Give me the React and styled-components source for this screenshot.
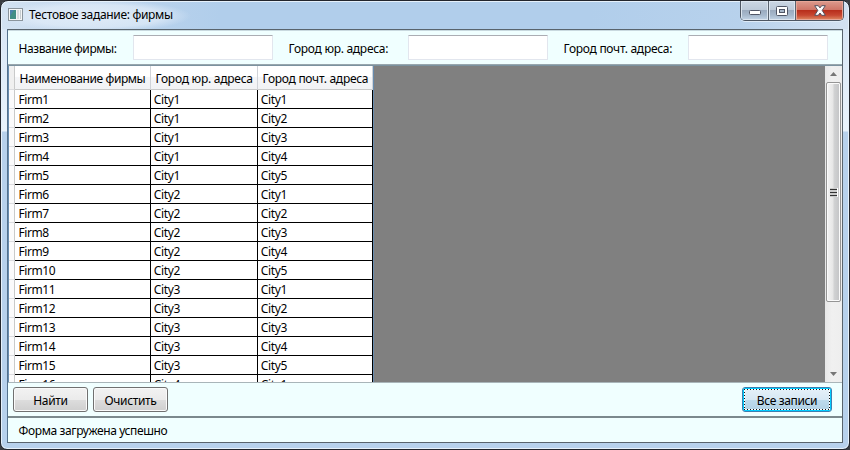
import React from "react";
import styled, { createGlobalStyle } from "styled-components";

const Global = createGlobalStyle`
  * { box-sizing: border-box; }
  body { margin: 0; background: #3a3d42; overflow: hidden; }
`;

const Window = styled.div`
  width: 850px;
  height: 450px;
  padding: 0 6px 6px;
  display: flex;
  flex-direction: column;
  border: 1px solid #23262d;
  border-radius: 8px 8px 7px 7px;
  box-shadow: inset 0 0 0 1px #e6f1fb;
  background:
    radial-gradient(ellipse 95px 16px at 95px 15px, rgba(232, 241, 250, 0.8) 0, rgba(225, 236, 248, 0.7) 70%, rgba(205, 224, 242, 0) 100%) 0 0 / 100% 28px no-repeat,
    linear-gradient(90deg, #d3e2f2 0, rgba(195, 216, 238, 0.6) 110px, rgba(177, 206, 235, 0) 220px) 0 0 / 100% 28px no-repeat,
    linear-gradient(270deg, #d3e1f1 0, rgba(190, 213, 237, 0.5) 110px, rgba(177, 206, 235, 0) 260px) 0 0 / 100% 28px no-repeat,
    linear-gradient(#b1ceeb, #b1ceeb) 0 0 / 100% 28px no-repeat,
    linear-gradient(#d5e4f4 0, #e9f3fc 130px, #b7d1ec 131px, #b7d1ec 100%);
  font-family: "Noto Sans", "Open Sans", sans-serif;
  font-size: 12px;
  color: #000;
`;

const TitleBar = styled.header`
  height: 28px;
  flex: none;
  display: flex;
  align-items: flex-start;
  padding: 0 0 0 1px;
`;

const AppIcon = styled.svg`
  margin: 7px 6px 0 0;
  flex: none;
`;

const Title = styled.h1`
  margin: 5px 0 0;
  flex: 1;
  font-size: 12px;
  font-weight: 400;
  line-height: 18px;
`;

const Text = styled.span`
  white-space: nowrap;
  letter-spacing: ${(p) => p.$track || 0}px;
`;

const Controls = styled.div`
  display: flex;
  width: 104px;
  height: 20px;
  margin-right: -1px;
  border: 1px solid #4d5663;
  border-top: 0;
  border-radius: 0 0 5px 5px;
  box-shadow: 0 1px 0 #dfebf7;
  overflow: hidden;
`;

const Control = styled.button`
  width: ${(p) => p.$width}px;
  height: 19px;
  padding: 0;
  border: 0;
  border-right: ${(p) => (p.$danger ? "0" : "1px solid #59626e")};
  box-shadow: inset 0 0 0 1px ${(p) => (p.$danger ? "#e7a697" : "#dce5ef")};
  background: ${(p) =>
    p.$danger
      ? "linear-gradient(#dc9b8e 0, #cf7668 45%, #b82f1c 50%, #c74731 75%, #df8d65 100%)"
      : "linear-gradient(#cbd7e4 0, #bdcad9 45%, #9babbf 50%, #a7b9cd 75%, #c3d4e6 100%)"};
  display: flex;
  align-items: center;
  justify-content: center;
`;

const MinimizeGlyph = styled.svg`
  margin-top: 4px;
`;

const Client = styled.main`
  flex: 1;
  min-height: 0;
  display: flex;
  flex-direction: column;
  border: 1px solid #59646d;
  border-left-color: #54718c;
  background: #f0ffff;
`;

const Filters = styled.section`
  height: 35px;
  flex: none;
  display: flex;
  align-items: flex-start;
  padding: 4px 0 0 10px;
  border-top: 1px solid #c9d9df;
  border-bottom: 1px solid #98a6ad;
`;

const FilterLabel = styled.label`
  width: ${(p) => p.$width}px;
  flex: none;
  padding: 5px 0 0 0.6px;
  line-height: 18px;
`;

const Input = styled.input`
  width: 140px;
  height: 25px;
  flex: none;
  margin-right: 15px;
  padding: 2px 4px;
  border: 1px solid #e2e6ee;
  border-top-color: #abadb3;
  border-radius: 1px;
  background: #fff;
  font: inherit;
  outline: 0;

  &:last-child { margin-right: 0; }
`;

const GridArea = styled.section`
  height: 317px;
  flex: none;
  display: flex;
  border-top: 1px solid #7b929f;
  background: #808080;
  overflow: hidden;
`;

const DataGrid = styled.div`
  width: 366px;
  height: 316px;
  overflow: hidden;
  border-left: 1px solid #688caf;
  border-right: 1px solid #688caf;
  background: #fff;
`;

const Row = styled.div`
  display: grid;
  grid-template-columns: 6px 136px 107px 115px;
  grid-template-rows: 100%;
  height: ${(p) => (p.$head ? 24 : 19)}px;
`;

const RowHeader = styled.div`
  background: ${(p) => (p.$head ? "#f0f0f0" : "#fbfbfc")};
  border-right: 1px solid #c9caca;
  border-bottom: 1px solid #dcdde0;
`;

const HeadCell = styled.div`
  display: flex;
  align-items: center;
  padding: 2px 0 0 4.6px;
  border-right: 1px solid #d0d3d8;
  border-bottom: 1px solid #c9caca;
  background: linear-gradient(#fff 0, #fff 45%, #f5f6f8 50%, #f2f3f5 100%);
`;

const Cell = styled.div`
  padding-left: ${(p) => (p.$first ? 3.4 : 2.8)}px;
  line-height: 20px;
  border-right: 1px solid #000;
  border-bottom: 1px solid #000;
`;

const Spacer = styled.div`
  flex: 1;
`;

const ScrollTrack = styled.div`
  width: 17px;
  height: 316px;
  flex: none;
  display: flex;
  flex-direction: column;
  align-items: center;
  background: linear-gradient(90deg, #e7e7e7 0, #f0f0f0 40%, #eee 100%);
`;

const ArrowBox = styled.div`
  height: 16px;
  display: flex;
  align-items: center;
  justify-content: center;
`;

const Thumb = styled.div`
  width: 15px;
  height: 220px;
  display: flex;
  align-items: center;
  justify-content: center;
  border: 1px solid #959595;
  border-radius: 2px;
  box-shadow: inset 0 0 0 1px #fbfbfb;
  background: linear-gradient(90deg, #f4f4f4 0, #e6e6e6 45%, #d1d2d3 55%, #c2c3c5 100%);
`;

const Actions = styled.section`
  height: 34px;
  flex: none;
  display: flex;
  gap: 5px;
  padding: 4px 10px 0 5px;
  border-top: 1px solid #a9b5b9;
`;

const Button = styled.button`
  width: ${(p) => p.$width}px;
  height: 25px;
  padding: 0;
  border: 1px solid ${(p) => (p.$focused ? "#3c7fb1" : "#707070")};
  border-radius: 3px;
  box-shadow: ${(p) => (p.$focused ? "inset 0 0 0 2px #00ccff" : "inset 0 0 0 1px #fafafa")};
  background: ${(p) =>
    p.$focused
      ? "linear-gradient(#e6f1f9 0, #d7e8f4 50%, #bddbed 51%, #b1d1e5 100%)"
      : "linear-gradient(#f2f2f2 0, #ebebeb 50%, #dddddd 51%, #cfcfcf 100%)"};
  font: inherit;
  color: #000;
`;

const FocusRing = styled.span`
  display: flex;
  align-items: center;
  justify-content: center;
  height: 21px;
  margin: 0 1px;
  padding-top: 1px;
  border: 1px solid transparent;
  ${(p) =>
    p.$on &&
    `background:
      repeating-linear-gradient(90deg, #111 0 1px, #fff 1px 3px) 0 0 / 100% 1px no-repeat border-box,
      repeating-linear-gradient(90deg, #111 0 1px, #fff 1px 3px) 0 100% / 100% 1px no-repeat border-box,
      repeating-linear-gradient(#111 0 1px, #fff 1px 3px) 0 0 / 1px 100% no-repeat border-box,
      repeating-linear-gradient(#111 0 1px, #fff 1px 3px) 100% 0 / 1px 100% no-repeat border-box;`}
`;

const Status = styled.footer`
  flex: 1;
  padding: 3px 0 0 10.6px;
  border-top: 2px solid #7b898d;
  line-height: 20px;
`;

const filters = [
  { text: "Название фирмы:", width: 115, track: -0.45 },
  { text: "Город юр. адреса:", width: 120, track: -0.28 },
  { text: "Город почт. адреса:", width: 125, track: -0.28 },
];

const columns = [
  { text: "Наименование фирмы", track: -0.42 },
  { text: "Город юр. адреса", track: -0.25 },
  { text: "Город почт. адреса", track: -0.28 },
];

const firms = Array.from({ length: 16 }, (_, i) => [
  `Firm${i + 1}`,
  `City${Math.floor(i / 5) + 1}`,
  `City${(i % 5) + 1}`,
]);

export default function App() {
  return (
    <>
      <Global />
      <Window>
        <TitleBar>
          <AppIcon width="15" height="13" viewBox="0 0 15 13">
            <rect x=".5" y=".5" width="14" height="12" fill="#f5f7f8" stroke="#8a949c" />
            <rect x="2" y="2" width="6" height="9" fill="#438f86" />
            <path d="M2 2h4l-4 6z" fill="#4c83ad" />
            <rect x="9" y="2" width="2" height="9" fill="#d9dde0" />
            <rect x="12" y="2" width="1" height="9" fill="#c6ccd0" />
          </AppIcon>
          <Title><Text $track={-0.32}>Тестовое задание: фирмы</Text></Title>
          <Controls>
            <Control $width={28} aria-label="Свернуть">
              <MinimizeGlyph width="12" height="6" viewBox="0 0 12 6">
                <rect x=".5" y=".5" width="11" height="4" rx="1" fill="#fff" stroke="#505666" />
              </MinimizeGlyph>
            </Control>
            <Control $width={27} aria-label="Развернуть">
              <svg width="12" height="10" viewBox="0 0 12 10">
                <rect x=".5" y=".5" width="11" height="9" rx="1" fill="#fff" stroke="#505666" />
                <rect x="3.5" y="3.5" width="5" height="3" fill="#a9b9cb" stroke="#505666" />
              </svg>
            </Control>
            <Control $width={47} $danger aria-label="Закрыть">
              <svg width="12" height="11" viewBox="0 0 12 11">
                <path d="M.7 .7h3.6L6 2.9 7.7 .7h3.6L8.2 5.4l3.1 4.9H7.7L6 8 4.3 10.3H.7l3.1-4.9z" fill="#fff" stroke="#53525f" strokeLinejoin="round" />
              </svg>
            </Control>
          </Controls>
        </TitleBar>
        <Client>
          <Filters>
            {filters.map((f) => (
              <React.Fragment key={f.text}>
                <FilterLabel $width={f.width}><Text $track={f.track}>{f.text}</Text></FilterLabel>
                <Input />
              </React.Fragment>
            ))}
          </Filters>
          <GridArea>
            <DataGrid>
              <Row $head>
                <RowHeader $head />
                {columns.map((c) => (
                  <HeadCell key={c.text}><Text $track={c.track}>{c.text}</Text></HeadCell>
                ))}
              </Row>
              {firms.map((firm) => (
                <Row key={firm[0]}>
                  <RowHeader />
                  {firm.map((value, i) => (
                    <Cell key={i} $first={i === 0}><Text $track={-0.38}>{value}</Text></Cell>
                  ))}
                </Row>
              ))}
            </DataGrid>
            <Spacer />
            <ScrollTrack>
              <ArrowBox>
                <svg width="7" height="4" viewBox="0 0 7 4"><path d="M0 4L3.5 0 7 4z" fill="#777" /></svg>
              </ArrowBox>
              <Thumb>
                <svg width="8" height="9" viewBox="0 0 8 9">
                  <path d="M0 1.5h8M0 4.5h8M0 7.5h8" stroke="#fff" strokeWidth="3" />
                  <path d="M0 1.5h7M0 4.5h7M0 7.5h7" stroke="#333" strokeWidth="1.4" />
                </svg>
              </Thumb>
              <Spacer />
              <ArrowBox>
                <svg width="7" height="4" viewBox="0 0 7 4"><path d="M0 0h7L3.5 4z" fill="#777" /></svg>
              </ArrowBox>
            </ScrollTrack>
          </GridArea>
          <Actions>
            <Button $width={75}><FocusRing><Text $track={-0.3}>Найти</Text></FocusRing></Button>
            <Button $width={75}><FocusRing><Text $track={-0.35}>Очистить</Text></FocusRing></Button>
            <Spacer />
            <Button $width={90} $focused><FocusRing $on><Text $track={-0.35}>Все записи</Text></FocusRing></Button>
          </Actions>
          <Status><Text $track={-0.38}>Форма загружена успешно</Text></Status>
        </Client>
      </Window>
    </>
  );
}
